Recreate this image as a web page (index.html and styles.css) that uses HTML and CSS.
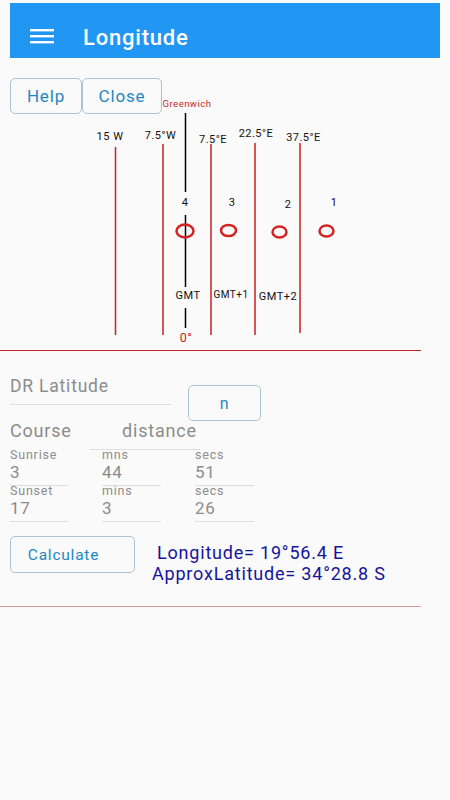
FILE: index.html
```html
<!DOCTYPE html>
<html lang="en">
<head>
    <meta charset="UTF-8">
    <meta name="viewport" content="width=device-width, initial-scale=1.0">
    <title>Longitude</title>
    <link rel="stylesheet" href="styles.css">
</head>
<body>
    <!-- App Bar -->
    <div class="appbar">
        <svg class="menu-icon" width="24" height="16" viewBox="0 0 24 16">
            <rect x="0" y="0" width="24" height="2.4" fill="#fff"/>
            <rect x="0" y="6" width="24" height="2.4" fill="#fff"/>
            <rect x="0" y="12" width="24" height="2.4" fill="#fff"/>
        </svg>
        <span class="title">Longitude</span>
    </div>

    <!-- Time zone chart -->
    <div class="chart">
        <svg class="chart-canvas" width="450" height="292" viewBox="0 58 450 292">
            <text x="187" y="106.5" class="t-green">Greenwich</text>

            <g stroke="#000" stroke-width="1.5">
                <line x1="185.5" y1="113" x2="185.5" y2="192"/>
                <line x1="185.5" y1="215" x2="185.5" y2="287"/>
                <line x1="185.5" y1="308" x2="185.5" y2="328"/>
            </g>

            <g stroke="#c91f1f" stroke-width="1.5">
                <line x1="115.5" y1="147" x2="115.5" y2="335"/>
                <line x1="163" y1="144" x2="163" y2="335"/>
                <line x1="211" y1="144" x2="211" y2="335"/>
                <line x1="255" y1="143" x2="255" y2="335"/>
                <line x1="300" y1="143" x2="300" y2="333"/>
            </g>

            <g class="t-label">
                <text x="110" y="140">15 W</text>
                <text x="160.5" y="139">7.5°W</text>
                <text x="213" y="143">7.5°E</text>
                <text x="256" y="137">22.5°E</text>
                <text x="303.5" y="141">37.5°E</text>

                <text x="185" y="206">4</text>
                <text x="232" y="206">3</text>
                <text x="288" y="208">2</text>
                <text x="334" y="206">1</text>

                <text x="188" y="299">GMT</text>
                <text x="231" y="298" class="t-small">GMT+1</text>
                <text x="278" y="300">GMT+2</text>
            </g>

            <g fill="none" stroke="#d32222" stroke-width="2.5">
                <ellipse cx="185" cy="231" rx="8.5" ry="6.5"/>
                <ellipse cx="228.5" cy="230.5" rx="7.5" ry="5.5"/>
                <ellipse cx="279.5" cy="232" rx="7" ry="5.5"/>
                <ellipse cx="326.5" cy="231" rx="7" ry="5.5"/>
            </g>

            <text x="186" y="341.5" class="t-zero">0°</text>
        </svg>

        <div class="toolbar">
            <button class="btn btn-help">Help</button>
            <button class="btn btn-close">Close</button>
        </div>
    </div>

    <div class="rule"></div>

    <!-- Inputs -->
    <div class="form">
        <div class="lat-row">
            <div class="field lat-field">DR Latitude</div>
            <button class="btn btn-ns">n</button>
        </div>

        <div class="course-row">
            <span class="field course">Course</span>
            <span class="field distance">distance</span>
        </div>

        <div class="time-grid">
            <div class="cell"><span class="cell-label">Sunrise</span><span class="cell-value">3</span></div>
            <div class="cell"><span class="cell-label">mns</span><span class="cell-value">44</span></div>
            <div class="cell"><span class="cell-label">secs</span><span class="cell-value">51</span></div>
            <div class="cell"><span class="cell-label">Sunset</span><span class="cell-value">17</span></div>
            <div class="cell"><span class="cell-label">mins</span><span class="cell-value">3</span></div>
            <div class="cell"><span class="cell-label">secs</span><span class="cell-value">26</span></div>
        </div>

        <div class="calc-row">
            <button class="btn btn-calc">Calculate</button>
            <div class="result">
                <div class="result-first">Longitude= 19°56.4 E</div>
                <div>ApproxLatitude= 34°28.8 S</div>
            </div>
        </div>
    </div>

    <div class="rule rule-light"></div>
</body>
</html>
```

FILE: styles.css
```css
body {
    margin: 0;
    background: #fafafa;
    font-family: Roboto, "Liberation Sans", sans-serif;
    letter-spacing: 0.05em;
}
.appbar {
    margin: 3px 10px 0;
    height: 42px;
    background: #2196f3;
    display: flex;
    align-items: center;
    padding: 13px 0 0 20px;
}
.menu-icon {
    margin-right: 29px;
}
.title {
    color: #fff;
    font-size: 22px;
    font-weight: 500;
}
.chart {
    position: relative;
    height: 292px;
}
.chart-canvas {
    position: absolute;
    top: 0;
    left: 0;
    letter-spacing: 0.03em;
}
.t-green {
    fill: #c62828;
    font-size: 9.5px;
    text-anchor: middle;
}
.t-label text {
    fill: #111;
    font-size: 11px;
    text-anchor: middle;
}
.t-label .t-small {
    font-size: 10px;
}
.t-zero {
    fill: #d32222;
    font-size: 12.5px;
    text-anchor: middle;
}
.toolbar {
    position: relative;
    display: flex;
    padding: 20px 10px 0;
}
.btn {
    height: 36px;
    background: #fafafa;
    border: 1px solid #a9c5d4;
    border-radius: 5px;
    color: #1f87c3;
    font-family: Roboto, "Liberation Sans", sans-serif;
    font-size: 17px;
    letter-spacing: 0.05em;
    padding: 0;
    cursor: pointer;
}
.btn-help {
    width: 72px;
}
.btn-close {
    width: 80px;
}
.rule {
    width: 421px;
    height: 1px;
    background: #c0282a;
}
.rule-light {
    margin-top: 22px;
    background: #d79a9a;
}
.form {
    padding: 0 10px;
}
.field {
    color: #8c8c8c;
}
.lat-row {
    display: flex;
    align-items: flex-start;
    height: 69px;
}
.lat-field {
    width: 161px;
    margin-top: 23px;
    font-size: 17.5px;
    line-height: 24px;
    padding-bottom: 6px;
    border-bottom: 1px solid #dedede;
}
.btn-ns {
    width: 73px;
    margin: 34px 0 0 17px;
    font-size: 16px;
}
.course-row {
    display: flex;
    font-size: 18px;
    line-height: 22px;
}
.course {
    width: 80px;
}
.distance {
    width: 78px;
    padding: 0 0 7px 32px;
    border-bottom: 1px solid #dedede;
}
.time-grid {
    display: grid;
    grid-template-columns: 58px 59px 59px;
    column-gap: 34px;
}
.cell {
    display: flex;
    flex-direction: column;
    height: 35px;
    border-bottom: 1px solid #dedede;
    color: #8c8c8c;
}
.cell-label {
    font-size: 12.5px;
    line-height: 9px;
}
.cell-value {
    font-size: 17px;
    line-height: 22px;
    padding-top: 2px;
}
.calc-row {
    display: flex;
    align-items: flex-start;
    margin-top: 14px;
}
.btn-calc {
    width: 125px;
    height: 37px;
    padding-right: 18px;
    font-size: 15.5px;
}
.result {
    margin: 6px 0 0 17px;
    color: #15159c;
    font-size: 18px;
    line-height: 21px;
}
.result-first {
    padding-left: 5px;
}
```
